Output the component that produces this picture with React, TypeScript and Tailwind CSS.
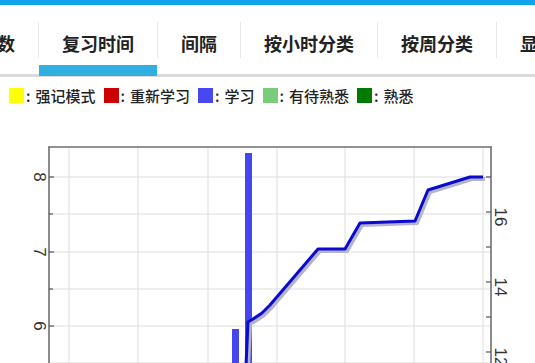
import React from "react";

const tabs = ["次数", "复习时间", "间隔", "按小时分类", "按周分类", "显示"];

const legend = [
  { color: "bg-[#ffff00]", label: "强记模式" },
  { color: "bg-[#cc0000]", label: "重新学习" },
  { color: "bg-[#4848f0]", label: "学习" },
  { color: "bg-[#7acc7a]", label: "有待熟悉" },
  { color: "bg-[#007a00]", label: "熟悉" },
];

const cjk = { fontFamily: '"Noto Sans CJK SC", "Noto Sans", sans-serif' };

function Chart() {
  const vGrid = [69, 138, 208, 277, 345, 414, 483];
  const hGrid = [37, 74, 112, 149, 186, 223];
  const leftTicks = [
    { y: 37, label: "8" },
    { y: 74 },
    { y: 112, label: "7" },
    { y: 149 },
    { y: 186, label: "6" },
  ];
  const rightTicks = [
    { y: 38 },
    { y: 73, label: "16" },
    { y: 108 },
    { y: 143, label: "14" },
    { y: 178 },
    { y: 213, label: "12" },
  ];
  const pts = [
    [246, 226],
    [248, 182],
    [253, 179],
    [262, 173],
    [270, 165],
    [318, 109],
    [345, 109],
    [360, 83],
    [415, 81],
    [428, 50],
    [470, 37],
    [483, 37],
  ];
  const d = pts.map((p, i) => `${i ? "L" : "M"}${p[0]} ${p[1]}`).join(" ");

  return (
    <svg width="535" height="223" viewBox="0 0 535 223" className="block">
      {vGrid.map((x) => (
        <line key={x} x1={x} y1={7} x2={x} y2={223} stroke="#dddddd" strokeWidth="1" />
      ))}
      {hGrid.map((y) => (
        <line key={y} x1={49} y1={y} x2={491} y2={y} stroke="#dddddd" strokeWidth="1" />
      ))}

      <rect x={232} y={189} width={7} height={40} fill="#4646ee" />
      <rect x={245} y={13} width={7} height={215} fill="#4646ee" />

      <path d={d} fill="none" stroke="#b4b4cc" strokeWidth="4" strokeLinejoin="round" transform="translate(2 2)" />
      <path d={d} fill="none" stroke="#0a0ad0" strokeWidth="3" strokeLinejoin="round" />

      <line x1={48} y1={7} x2={492} y2={7} stroke="#6e6e6e" strokeWidth="1.6" />
      <line x1={49} y1={7} x2={49} y2={223} stroke="#6e6e6e" strokeWidth="1.6" />
      <line x1={491} y1={7} x2={491} y2={223} stroke="#6e6e6e" strokeWidth="1.6" />

      {leftTicks.map((t) => (
        <g key={t.y}>
          <line x1={49} y1={t.y} x2={t.label ? 54 : 53} y2={t.y} stroke="#555" strokeWidth="1.2" />
          {t.label && (
            <text
              x={39}
              y={t.y}
              transform={`rotate(90 39 ${t.y})`}
              textAnchor="middle"
              dominantBaseline="central"
              fontSize="17"
              fill="#333"
              fontFamily="'Liberation Sans', Arial, sans-serif"
            >
              {t.label}
            </text>
          )}
        </g>
      ))}
      {rightTicks.map((t) => (
        <g key={t.y}>
          <line x1={486} y1={t.y - 1} x2={491} y2={t.y - 1} stroke="#555" strokeWidth="1.2" />
          {t.label && (
            <text
              x={500}
              y={t.y + 4}
              transform={`rotate(90 500 ${t.y + 4})`}
              textAnchor="middle"
              dominantBaseline="central"
              fontSize="17"
              fill="#333"
              fontFamily="'Liberation Sans', Arial, sans-serif"
            >
              {t.label}
            </text>
          )}
        </g>
      ))}
    </svg>
  );
}

export default function App() {
  return (
    <main className="h-[363px] w-[535px] overflow-hidden bg-white" style={cjk}>
      <div className="h-[5px] bg-[#10a3ea]" />

      <div className="flex h-[72px] border-b-[3px] border-[#dadada]">
        <div className="-ml-[44px] flex">
          {tabs.map((t, i) => (
            <React.Fragment key={t}>
              {i > 0 && <div className="mt-[17px] h-9 w-px shrink-0 bg-[#e8e8e8]" />}
              <div className="relative flex shrink-0 items-center px-[23px] pt-[7px] text-[18px] font-semibold leading-none text-[#222]">
                {t}
                {i === 1 && <div className="absolute -bottom-[2px] left-0 right-0 h-[11px] bg-[#2fb0e0]" />}
              </div>
            </React.Fragment>
          ))}
        </div>
      </div>

      <div className="flex h-[37px] items-center pl-[9px] text-[15px] font-medium leading-none text-[#222]">
        {legend.map((l) => (
          <div key={l.label} className="mr-[8px] flex items-center">
            <span className={`h-[15px] w-[15px] ${l.color}`} />
            <span className="ml-[2px]">:</span>
            <span className="ml-[5px]">{l.label}</span>
          </div>
        ))}
      </div>

      <div className="mt-[26px]">
        <Chart />
      </div>
    </main>
  );
}
